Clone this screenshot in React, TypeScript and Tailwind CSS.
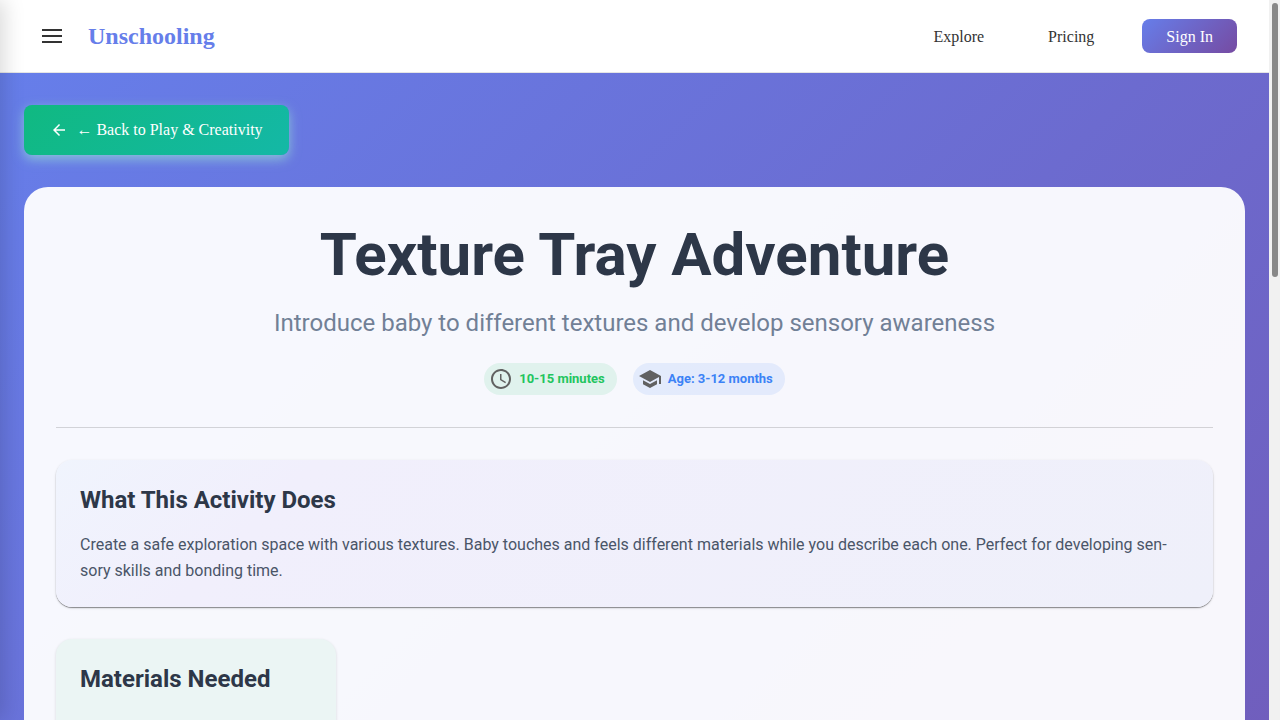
import React from "react";
import { MdAccessTime, MdArrowBack, MdSchool } from "react-icons/md";

function Header() {
  return (
    <header className="flex h-[73px] shrink-0 items-center justify-between border-b border-[#e5e5e5] bg-white px-8 font-['Liberation_Serif',serif] text-[#333]">
      <div className="flex items-center gap-4">
        <button type="button" aria-label="Open menu" className="flex h-10 w-10 flex-col items-center justify-center gap-1">
          <span className="h-0.5 w-5 bg-[#333]" />
          <span className="h-0.5 w-5 bg-[#333]" />
          <span className="h-0.5 w-5 bg-[#333]" />
        </button>
        <a href="#home" className="text-2xl font-bold text-[#667eea]">Unschooling</a>
      </div>
      <nav className="flex items-center gap-12">
        <div className="flex gap-16 pt-0.5">
          <a href="#explore">Explore</a>
          <a href="#pricing">Pricing</a>
        </div>
        <a href="#signin" className="rounded-lg bg-[linear-gradient(135deg,#667eea_0%,#764ba2_100%)] px-6 pt-1.5 pb-1 font-medium text-white">Sign In</a>
      </nav>
    </header>
  );
}

function ActivityCard() {
  return (
    <main className="flex-1 rounded-3xl bg-white/95 p-8 font-[Roboto,sans-serif] text-[#2d3748]">
      <div className="flex flex-col items-center border-b border-black/15 pb-8">
        <h1 className="text-6xl leading-[72px] font-bold">Texture Tray Adventure</h1>
        <p className="mt-4 text-2xl leading-8 text-[#718096]">Introduce baby to different textures and develop sensory awareness</p>
        <ul className="mt-6 flex gap-4 text-[13px] font-bold">
          <li className="flex h-8 items-center gap-1.5 rounded-full bg-[#22c55e]/10 pr-3 pl-[5px] text-[#22c55e]">
            <MdAccessTime size={24} color="#616161" />
            10-15 minutes
          </li>
          <li className="flex h-8 items-center gap-1.5 rounded-full bg-[#3b82f6]/10 pr-3 pl-[5px] text-[#3b82f6]">
            <MdSchool size={24} color="#616161" />
            Age: 3-12 months
          </li>
        </ul>
      </div>
      <section className="mt-8 rounded-2xl bg-[linear-gradient(135deg,#f0f4fd_0%,#f1effc_20%,#eff0fa_100%)] px-6 pt-6 pb-[23px] shadow-[0_1px_1px_rgba(0,0,0,0.4),0_1px_3px_rgba(0,0,0,0.12)]">
        <h2 className="text-2xl font-bold">What This Activity Does</h2>
        <p className="mt-4 text-base leading-[26px] text-[#4a5568]">
          Create a safe exploration space with various textures. Baby touches and feels different materials while you describe each one. Perfect for developing sen&shy;sory skills and bonding time.
        </p>
      </section>
      <section className="mt-8 min-h-40 w-[280px] rounded-2xl bg-[#ebf5f4] p-6 shadow-[0_1px_3px_rgba(0,0,0,0.14)]">
        <h2 className="text-2xl font-bold">Materials Needed</h2>
      </section>
    </main>
  );
}

export default function App() {
  return (
    <div className="relative flex h-screen overflow-hidden">
      <div className="flex min-w-0 flex-1 flex-col">
        <Header />
        <div className="flex-1 overflow-hidden">
          <div className="flex min-h-[1800px] flex-col bg-[linear-gradient(135deg,#667eea_0%,#764ba2_100%)] px-6 py-8">
            <a href="#play" className="mb-8 flex h-[50px] w-[265px] items-center justify-center gap-2 rounded-lg bg-[linear-gradient(135deg,#10b981_0%,#14b8a6_100%)] font-['Liberation_Serif',serif] text-base font-medium text-white shadow-[0_4px_12px_rgba(160,240,210,0.6)]">
              <MdArrowBack size={18} />
              ← Back to Play &amp; Creativity
            </a>
            <ActivityCard />
          </div>
        </div>
      </div>
      <div aria-hidden="true" className="w-[11px] shrink-0 bg-[#f1f1f1] px-[3px] pt-[3px]">
        <div className="h-[274px] w-1.5 rounded-full bg-[#888]" />
      </div>
      <div aria-hidden="true" className="absolute inset-y-0 right-full w-70 shadow-[4px_0_20px_rgba(0,0,0,0.15)]" />
    </div>
  );
}
